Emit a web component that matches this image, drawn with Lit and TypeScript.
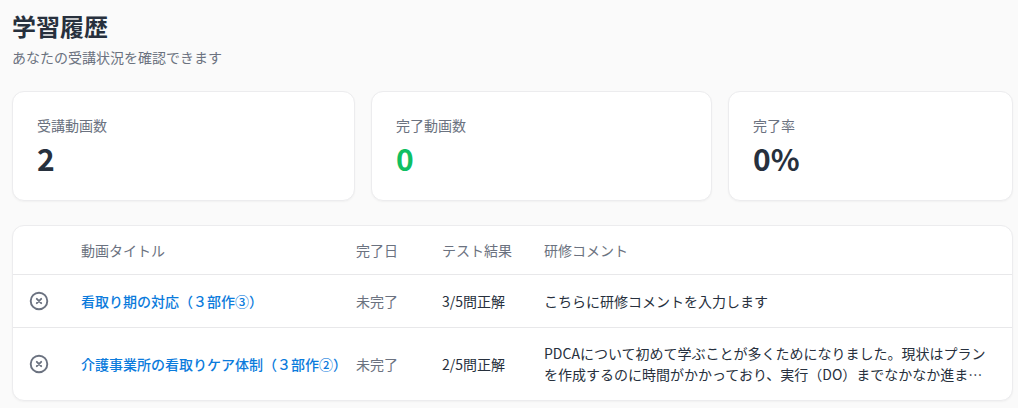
import { LitElement, html, css } from "lit";
import { customElement } from "lit/decorators.js";

const icon = html`<svg class="ic" viewBox="0 0 20 20" fill="none" stroke="currentColor" stroke-width="1.9" stroke-linecap="round"><circle cx="10" cy="10" r="8.3"/><path d="M7.8 7.8l4.4 4.4M12.2 7.8l-4.4 4.4"/></svg>`;

@customElement("app-root")
export class AppRoot extends LitElement {
  static styles = css`
    :host { display: block; font-family: "Noto Sans CJK JP", "Noto Sans", sans-serif; background: #fafafa; width: 1018px; height: 408px; overflow: hidden; color: #1f2937; }
    .wrap { padding: 8px 5px 0 12px; display: flex; flex-direction: column; }
    h1 { margin: 0; font-size: 24px; line-height: 36px; font-weight: 700; color: #27303d; }
    .sub { font-size: 14px; line-height: 20px; color: #6b7280; margin-top: 3px; }
    .cards { display: grid; grid-template-columns: 343px 341px 285px; gap: 16px; margin-top: 24px; }
    .card { height: 110px; box-sizing: border-box; background: #fff; border: 1px solid #ececee; border-radius: 12px; padding: 24px; box-shadow: 0 1px 2px rgba(0,0,0,.04); }
    .lab { font-size: 14px; line-height: 18px; color: #6b7280; }
    .val { font-size: 30px; line-height: 36px; font-weight: 700; margin-top: 6px; color: #27303d; }
    .val.green { color: #0fbf62; }
    .table { margin-top: 24px; background: #fff; border: 1px solid #ececee; border-radius: 12px; font-size: 14px; box-shadow: 0 1px 2px rgba(0,0,0,.04); color: #27303d; }
    .row { display: grid; grid-template-columns: 68px 275px 86px 102px 1fr; align-items: center; border-bottom: 1px solid #e8e8ea; }
    .row:last-child { border-bottom: 0; }
    .head { height: 48px; color: #6b7280; }
    .r1 { height: 52px; }
    .r2 { height: 72px; }
    .ic { width: 20px; height: 20px; color: #6b7280; margin-left: 16px; display: block; }
    .link { color: #0b7bdc; font-weight: 500; }
    .muted { color: #6b7280; }
    .note { line-height: 21px; padding-right: 24px; display: -webkit-box; -webkit-box-orient: vertical; -webkit-line-clamp: 2; overflow: hidden; }
  `;
  render() {
    return html`<div class="wrap">
      <h1>学習履歴</h1>
      <div class="sub">あなたの受講状況を確認できます</div>
      <div class="cards">
        <div class="card"><div class="lab">受講動画数</div><div class="val">2</div></div>
        <div class="card"><div class="lab">完了動画数</div><div class="val green">0</div></div>
        <div class="card"><div class="lab">完了率</div><div class="val">0%</div></div>
      </div>
      <div class="table">
        <div class="row head"><span></span><span>動画タイトル</span><span>完了日</span><span>テスト結果</span><span>研修コメント</span></div>
        <div class="row r1">${icon}<span class="link">看取り期の対応（３部作③）</span><span class="muted">未完了</span><span>3/5問正解</span><span>こちらに研修コメントを入力します</span></div>
        <div class="row r2">${icon}<span class="link">介護事業所の看取りケア体制（３部作②）</span><span class="muted">未完了</span><span>2/5問正解</span><span class="note">PDCAについて初めて学ぶことが多くためになりました。現状はプランを作成するのに時間がかかっており、実行（DO）までなかなか進まないことが課題だと感じました。今後は改善していきたいです。</span></div>
      </div>
    </div>`;
  }
}
